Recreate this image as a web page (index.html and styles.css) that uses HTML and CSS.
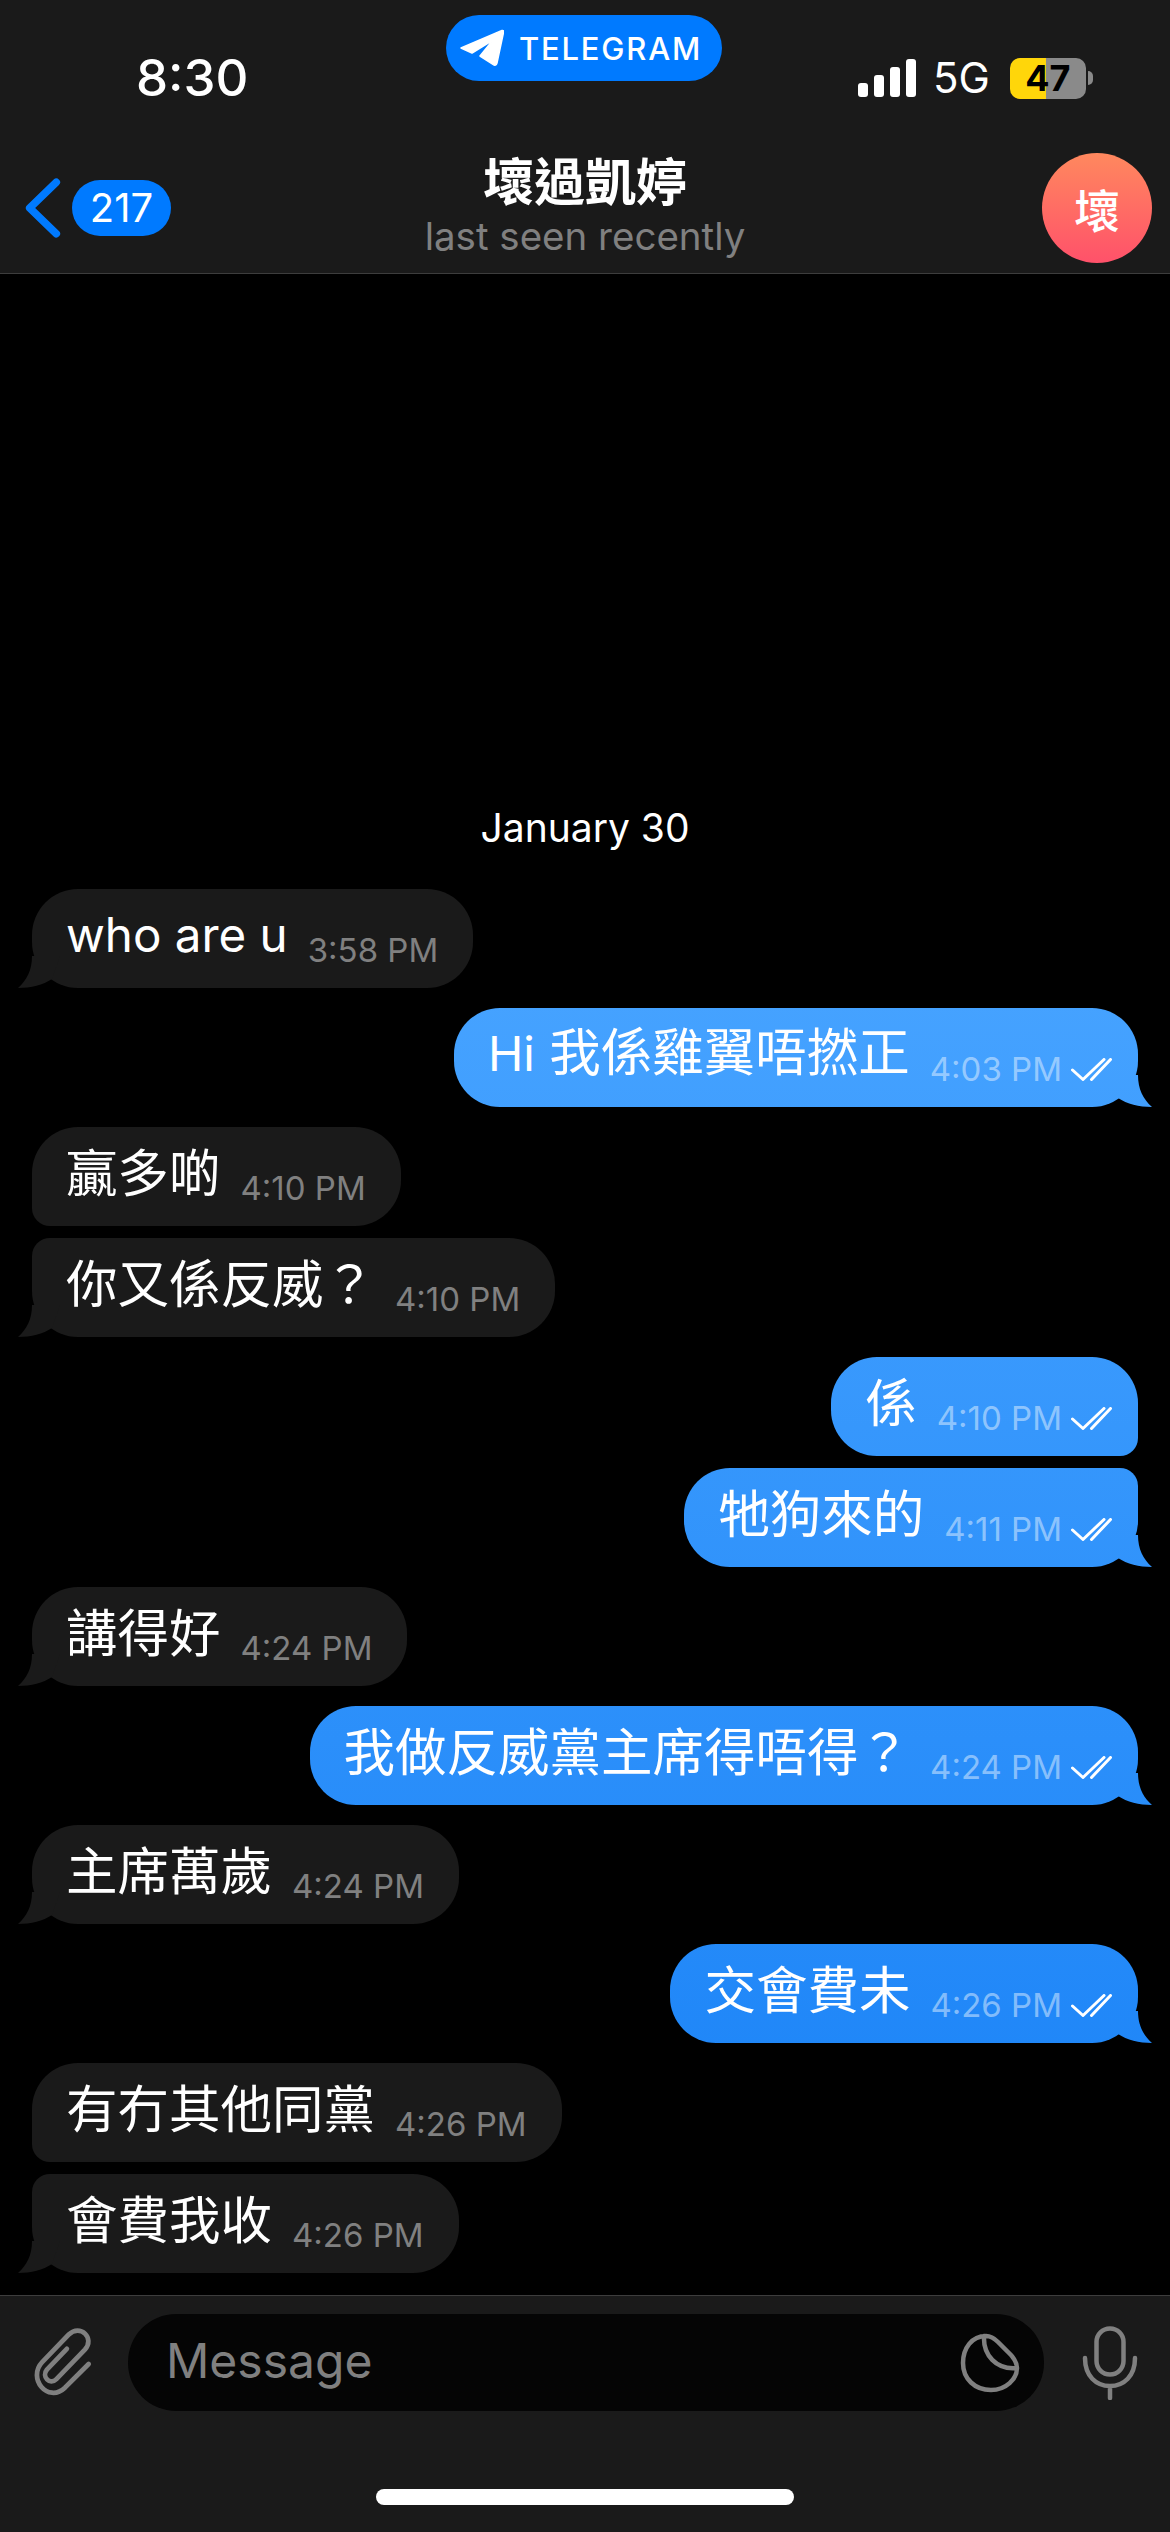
FILE: index.html
```html
<!DOCTYPE html>
<html lang="zh-Hant">
<head>
  <meta charset="UTF-8" />
  <title>Telegram chat</title>
  <link rel="stylesheet" href="styles.css">
</head>
<body>
  <div class="phone">
    <header class="top">
      <div class="status">
        <span class="clock">8:30</span>
        <div class="pill">
          <svg class="plane" viewBox="0 0 44 38"><path d="M1 19 L42 1.500 Q44 1 43.500 3.500 L37 34 Q36 37.500 33 35.500 L20 27 L33 11 L12 24 Z" fill="#fff" stroke="#fff" stroke-width="1.500" stroke-linejoin="round"/></svg>
          <span>TELEGRAM</span>
        </div>
        <div class="status-right">
          <div class="signal"><i class="b1"></i><i class="b2"></i><i class="b3"></i><i class="b4"></i></div>
          <span class="net">5G</span>
          <div class="battery"><span>47</span></div>
          <div class="nub"></div>
        </div>
      </div>
      <div class="nav">
        <div class="back">
          <svg class="chev" viewBox="0 0 40 64"><path d="M34 5 L6 32 L34 59" fill="none" stroke="#007aff" stroke-width="8" stroke-linecap="round" stroke-linejoin="round"/></svg>
          <span class="count">217</span>
        </div>
        <div class="who">
          <div class="name">壞過凱婷</div>
          <div class="seen">last seen recently</div>
        </div>
        <div class="avatar">壞</div>
      </div>
    </header>

    <main class="chat">
      <div class="day">January 30</div>

      <div class="msg in tail"><span class="txt lat">who are u</span><span class="time">3:58 PM</span></div>
      <div class="msg out tail"><span class="txt"><span class="lat">Hi</span> 我係雞翼唔撚正</span><span class="time">4:03 PM</span><svg class="ticks" viewBox="0 0 41 23"><path d="M1.500 12 L12 21.500 L33 1.500 M20.500 21.500 L39.500 1.500" fill="none" stroke="currentColor" stroke-width="3" stroke-linecap="round" stroke-linejoin="round"/></svg></div>
      <div class="msg in"><span class="txt">贏多啲</span><span class="time">4:10 PM</span></div>
      <div class="msg in tail close"><span class="txt">你又係反威？</span><span class="time">4:10 PM</span></div>
      <div class="msg out"><span class="txt">係</span><span class="time">4:10 PM</span><svg class="ticks" viewBox="0 0 41 23"><path d="M1.500 12 L12 21.500 L33 1.500 M20.500 21.500 L39.500 1.500" fill="none" stroke="currentColor" stroke-width="3" stroke-linecap="round" stroke-linejoin="round"/></svg></div>
      <div class="msg out tail close"><span class="txt">牠狗來的</span><span class="time">4:11 PM</span><svg class="ticks" viewBox="0 0 41 23"><path d="M1.500 12 L12 21.500 L33 1.500 M20.500 21.500 L39.500 1.500" fill="none" stroke="currentColor" stroke-width="3" stroke-linecap="round" stroke-linejoin="round"/></svg></div>
      <div class="msg in tail"><span class="txt">講得好</span><span class="time">4:24 PM</span></div>
      <div class="msg out tail"><span class="txt">我做反威黨主席得唔得？</span><span class="time">4:24 PM</span><svg class="ticks" viewBox="0 0 41 23"><path d="M1.500 12 L12 21.500 L33 1.500 M20.500 21.500 L39.500 1.500" fill="none" stroke="currentColor" stroke-width="3" stroke-linecap="round" stroke-linejoin="round"/></svg></div>
      <div class="msg in tail"><span class="txt">主席萬歲</span><span class="time">4:24 PM</span></div>
      <div class="msg out tail"><span class="txt">交會費未</span><span class="time">4:26 PM</span><svg class="ticks" viewBox="0 0 41 23"><path d="M1.500 12 L12 21.500 L33 1.500 M20.500 21.500 L39.500 1.500" fill="none" stroke="currentColor" stroke-width="3" stroke-linecap="round" stroke-linejoin="round"/></svg></div>
      <div class="msg in"><span class="txt">有冇其他同黨</span><span class="time">4:26 PM</span></div>
      <div class="msg in tail close"><span class="txt">會費我收</span><span class="time">4:26 PM</span></div>
    </main>

    <footer class="bottom">
      <div class="composer">
        <svg class="clip" viewBox="0 0 66 78"><path d="M36 24 L15 46 C9 53 18 63 25 56 L55 25 C66 13 50 -3 38 9 L10 38 C-6 55 16 82 34 65 L59 40" fill="none" stroke="#808080" stroke-width="5" stroke-linecap="round" stroke-linejoin="round"/></svg>
        <div class="field">
          <span class="placeholder">Message</span>
          <svg class="sticker" viewBox="0 0 60 60"><path d="M26 3 C12 3 3 15 3 30 C3 46 15 57 31 57 C46 57 57 46 57 35 C57 29 54 26 51 22 L38 9 C34 5 31 3 26 3 Z M24 3 C23 22 36 37 57 35" fill="none" stroke="#808080" stroke-width="4.500" stroke-linecap="round" stroke-linejoin="round"/></svg>
        </div>
        <svg class="mic" viewBox="0 0 56 74"><rect x="14.500" y="2.500" width="27" height="46" rx="13.500" fill="none" stroke="#808080" stroke-width="4.500"/><path d="M3 32 C3 50 14 60 28 60 C42 60 53 50 53 32 M28 60 L28 72" fill="none" stroke="#808080" stroke-width="4.500" stroke-linecap="round"/></svg>
      </div>
      <div class="home"></div>
    </footer>
  </div>
</body>
</html>
```

FILE: styles.css
```css
* { box-sizing: border-box; }
html, body { margin: 0; padding: 0; background: #000; }
body { font-family: Inter, "Noto Sans CJK TC", sans-serif; color: #fff; }

.phone { width: 1170px; height: 2532px; display: flex; flex-direction: column; overflow: hidden; }

/* header */
.top { height: 274px; background: #1a1a1a; border-bottom: 1px solid #3d3d3d; flex: none; }
.status { height: 130px; position: relative; }
.clock { position: absolute; left: 136px; top: 48px; font-size: 51px; font-weight: 500; line-height: 60px; }
.pill { position: absolute; left: 446px; top: 15px; width: 276px; height: 66px; border-radius: 33px; background: #007aff; display: flex; align-items: center; padding-left: 14px; gap: 15px; font-size: 31px; font-weight: 500; letter-spacing: 1.800px; }
.plane { width: 44px; height: 38px; }
.status-right { position: absolute; left: 858px; top: 52px; display: flex; align-items: center; height: 52px; }
.signal { display: flex; align-items: flex-end; gap: 6px; height: 38px; }
.signal i { display: block; width: 10px; border-radius: 3px; background: #fff; }
.b1 { height: 14px; }
.b2 { height: 22px; }
.b3 { height: 30px; }
.b4 { height: 38px; }
.net { font-size: 42px; margin-left: 17px; line-height: 50px; }
.battery { width: 76px; height: 41px; margin-left: 20px; border-radius: 10px; background: linear-gradient(90deg, #ffd60a 47%, #8a8a8a 47%); color: #000; font-size: 36px; font-weight: 700; text-align: center; line-height: 41px; }
.nub { width: 5px; height: 14px; background: #8a8a8a; border-radius: 0 5px 5px 0; margin-left: 2px; }

.nav { height: 143px; display: flex; align-items: center; position: relative; padding: 0 18px 0 24px; justify-content: space-between; }
.back { display: flex; align-items: center; gap: 10px; margin-top: 12px; }
.chev { width: 38px; height: 62px; }
.count { background: #007aff; height: 56px; min-width: 99px; border-radius: 28px; font-size: 40px; text-align: center; line-height: 56px; }
.who { position: absolute; left: 0; right: 0; top: 23px; text-align: center; }
.name { font-size: 51px; font-weight: 700; line-height: 60px; }
.seen { font-size: 38.500px; color: #808080; line-height: 46px; }
.avatar { width: 110px; height: 110px; border-radius: 50%; background: linear-gradient(180deg, #ff885e, #ff516a); font-size: 46px; font-weight: 500; display: flex; align-items: center; justify-content: center; margin-top: 13px; }

/* messages */
.chat { flex: 1; display: flex; flex-direction: column; justify-content: flex-end; padding: 0 32px 22px; }
.day { text-align: center; font-size: 39px; line-height: 44px; margin-bottom: 39px; }

.msg { height: 99px; border-radius: 46px; display: flex; align-items: flex-end; padding: 0 35px 0 34px; margin-top: 20px; position: relative; }
.msg.close { margin-top: 12px; }
.day + .msg { margin-top: 0; }
.msg.in { align-self: flex-start; background: #1a1a1a; }
.msg.out { align-self: flex-end; padding-right: 26px; background: linear-gradient(180deg, #45a2ff 1000px, #2087f8 2050px) fixed; }
.msg.in:not(.tail) { border-bottom-left-radius: 18px; }
.msg.out:not(.tail) { border-bottom-right-radius: 18px; }
.msg.in.close { border-top-left-radius: 18px; }
.msg.out.close { border-top-right-radius: 18px; }

.msg.tail::after { content: ""; position: absolute; bottom: 0; width: 42px; height: 32px; background: inherit; }
.msg.out.tail::after { right: -14px; clip-path: path("M0 0 L28 0 C28 14 33 24 42 32 C29 32 17 29 8 23 Z"); }
.msg.in.tail::after { left: -14px; clip-path: path("M42 0 L14 0 C14 14 9 24 0 32 C13 32 25 29 34 23 Z"); }

.txt { font-size: 51.500px; line-height: 60px; margin-bottom: 23px; }
.lat { font-size: 47.500px; }
.time { font-size: 33px; line-height: 40px; margin-left: 20px; margin-bottom: 18px; color: #808080; }
.out .time { color: rgba(255,255,255,.45); }
.ticks { width: 41px; height: 23px; margin-left: 9px; margin-bottom: 26px; color: #fff; flex: none; }

/* bottom */
.bottom { height: 237px; background: #1a1a1a; border-top: 1px solid #3d3d3d; flex: none; }
.composer { display: flex; align-items: center; padding: 18px 32px 0; height: 115px; }
.clip { width: 64px; height: 74px; }
.field { flex: 1; height: 97px; margin: 0 38px 0 32px; border-radius: 48px; background: #050505; display: flex; align-items: center; justify-content: space-between; padding: 0 24px 0 38px; }
.placeholder { font-size: 48px; color: #808080; padding-bottom: 5px; }
.sticker { width: 60px; height: 60px; }
.mic { width: 56px; height: 74px; }
.home { width: 418px; height: 16px; border-radius: 8px; background: #fff; margin: 78px auto 0; }
```
